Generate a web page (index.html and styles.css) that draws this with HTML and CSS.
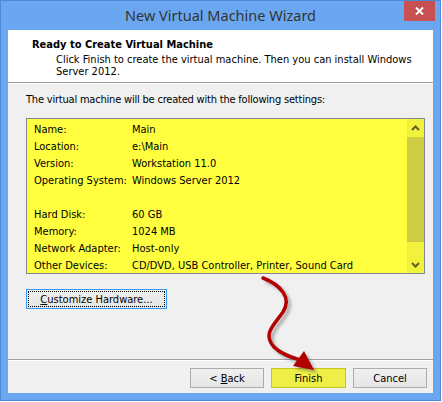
FILE: index.html
```html
<!DOCTYPE html>
<html lang="en">
<head>
    <meta charset="UTF-8">
    <title>New Virtual Machine Wizard</title>
    <link rel="stylesheet" href="styles.css">
</head>
<body>
    <div class="window">
        <!-- Заголовок окна -->
        <div class="titlebar">
            <span class="title">New Virtual Machine Wizard</span>
            <span class="close">
                <svg width="9" height="8" viewBox="0 0 9 8"><path d="M1 0.5 L8 7.5 M8 0.5 L1 7.5" stroke="#fff" stroke-width="2"/></svg>
            </span>
        </div>

        <div class="client">
            <div class="header">
                <div class="header-title">Ready to Create Virtual Machine</div>
                <div class="header-desc">Click Finish to create the virtual machine. Then you can install Windows Server 2012.</div>
            </div>

            <div class="content">
                <p class="intro">The virtual machine will be created with the following settings:</p>

                <div class="summary">
                    <div class="rows">
                        <div class="row"><span class="label">Name:</span><span>Main</span></div>
                        <div class="row"><span class="label">Location:</span><span>e:\Main</span></div>
                        <div class="row"><span class="label">Version:</span><span>Workstation 11.0</span></div>
                        <div class="row"><span class="label">Operating System:</span><span>Windows Server 2012</span></div>
                        <div class="row"></div>
                        <div class="row"><span class="label">Hard Disk:</span><span>60 GB</span></div>
                        <div class="row"><span class="label">Memory:</span><span>1024 MB</span></div>
                        <div class="row"><span class="label">Network Adapter:</span><span>Host-only</span></div>
                        <div class="row"><span class="label">Other Devices:</span><span>CD/DVD, USB Controller, Printer, Sound Card</span></div>
                    </div>
                    <!-- Полоса прокрутки -->
                    <div class="scrollbar">
                        <div class="sb-btn">
                            <svg width="9" height="6" viewBox="0 0 9 6"><path d="M1 5 L4.5 1.5 L8 5" fill="none" stroke="#5f5f2a" stroke-width="2"/></svg>
                        </div>
                        <div class="sb-track"><div class="sb-thumb"></div></div>
                        <div class="sb-btn">
                            <svg width="9" height="6" viewBox="0 0 9 6"><path d="M1 1 L4.5 4.5 L8 1" fill="none" stroke="#5f5f2a" stroke-width="2"/></svg>
                        </div>
                    </div>
                </div>

                <button class="btn btn-customize"><span class="focus-ring"><u>C</u>ustomize Hardware...</span></button>
            </div>

            <div class="footer">
                <button class="btn">&lt; <u>B</u>ack</button>
                <button class="btn btn-finish">Finish</button>
                <button class="btn">Cancel</button>
            </div>
        </div>

        <!-- Красная стрелка поверх окна -->
        <svg class="arrow" width="441" height="401" viewBox="0 0 441 401">
            <defs>
                <filter id="blur" x="-20%" y="-20%" width="140%" height="140%">
                    <feGaussianBlur stdDeviation="1.5"/>
                </filter>
            </defs>
            <g opacity="0.45" filter="url(#blur)" transform="translate(3,3)">
                <path d="M263 278 C281 285 292 298 283 312 C274 325 262 334 274 347 C281 354 290 357 300 360" fill="none" stroke="#555" stroke-width="3.5"/>
                <polygon points="314,370 293,366 304,351" fill="#555"/>
            </g>
            <path d="M263 278 C281 285 292 298 283 312 C274 325 262 334 274 347 C281 354 290 357 300 360" fill="none" stroke="#b50000" stroke-width="3.5" stroke-linecap="round"/>
            <polygon points="314,370 293,366 304,351" fill="#b00000"/>
        </svg>
    </div>
</body>
</html>
```

FILE: styles.css
```css
body {
    margin: 0;
    background: #ffffff;
    font-family: "DejaVu Sans Condensed", "DejaVu Sans", sans-serif;
    font-size: 11px;
    color: #000;
}

.window {
    position: relative;
    width: 441px;
    height: 401px;
    box-sizing: border-box;
    background: #6ba7f1;
    border: 1px solid #4f88d4;
    padding: 0 7px 7px 7px;
}

.titlebar {
    height: 29px;
    display: flex;
    align-items: center;
    justify-content: center;
}

.title {
    font-family: "Noto Sans", sans-serif;
    font-size: 14.5px;
    color: #333;
    margin-top: -1px;
}

.close {
    position: absolute;
    top: 0;
    left: 403px;
    width: 31px;
    height: 20px;
    background: #c75050;
    display: flex;
    align-items: center;
    justify-content: center;
}

.client {
    height: 363px;
    background: #f0f0f0;
    display: flex;
    flex-direction: column;
}

/* Белая шапка */
.header {
    height: 53px;
    box-sizing: border-box;
    background: #fff;
    border-bottom: 1px solid #a0a0a0;
    padding: 8px 0 0 24px;
}

.header-title {
    font-weight: bold;
    line-height: 13px;
}

.header-desc {
    margin: 3px 0 0 24px;
    width: 370px;
    line-height: 12px;
}

.content {
    flex: 1;
    border-top: 1px solid #fff;
    padding: 9px 0 0 18px;
}

.intro {
    margin: 0;
    line-height: 13px;
    letter-spacing: -0.2px;
}

.summary {
    margin-top: 12px;
    width: 399px;
    height: 156px;
    box-sizing: border-box;
    border: 1px solid #828790;
    background: #ffff40;
    display: flex;
}

.rows {
    flex: 1;
    padding: 2px 0 0 7px;
    overflow: hidden;
}

.row {
    height: 17px;
    line-height: 17px;
    display: flex;
    white-space: nowrap;
}

.label {
    width: 98px;
}

.scrollbar {
    width: 17px;
    display: flex;
    flex-direction: column;
    background: #f2f23c;
}

.sb-btn {
    height: 17px;
    display: flex;
    align-items: center;
    justify-content: center;
}

.sb-track {
    flex: 1;
}

.sb-thumb {
    margin-top: 1px;
    height: 105px;
    background: #cdcd42;
}

.btn {
    font-family: inherit;
    font-size: 11px;
    color: #000;
    height: 20px;
    width: 74px;
    padding: 0;
    border: 1px solid #acacac;
    background: linear-gradient(#f0f0f0, #e5e5e5);
}

.btn u {
    text-decoration: underline;
}

.btn-customize {
    margin-top: 15px;
    width: 141px;
    border-color: #3399ff;
    padding: 1px;
}

.focus-ring {
    display: block;
    height: 16px;
    line-height: 15px;
    box-sizing: border-box;
    border: 1px dotted #000;
}

.footer {
    height: 34px;
    box-sizing: border-box;
    border-top: 1px solid #a0a0a0;
    box-shadow: inset 0 1px #fff;
    padding: 8px 6px 0 0;
    display: flex;
    justify-content: flex-end;
    gap: 7px;
}

.btn-finish {
    width: 75px;
    background: #eeee48;
    border-color: #c4c41c;
}

.arrow {
    position: absolute;
    top: -1px;
    left: -1px;
    pointer-events: none;
}
```
